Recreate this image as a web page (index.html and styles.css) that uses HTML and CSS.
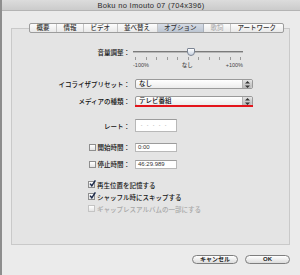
FILE: index.html
```
<!DOCTYPE html>
<html lang="ja">
<head>
    <meta charset="UTF-8">
    <title>Boku no Imouto 07 (704x396)</title>
    <link rel="stylesheet" href="styles.css">
</head>
<body>
    <div class="window">
        <div class="titlebar">Boku no Imouto 07 (704x396)</div>

        <div class="content">
            <nav class="tabs">
                <span class="tab">概要</span>
                <span class="tab">情報</span>
                <span class="tab">ビデオ</span>
                <span class="tab">並べ替え</span>
                <span class="tab active">オプション</span>
                <span class="tab disabled">歌詞</span>
                <span class="tab last">アートワーク</span>
            </nav>

            <section class="panel">
                <!-- 音量 -->
                <div class="row row-volume">
                    <span class="label">音量調整：</span>
                    <div class="slider">
                        <span class="track"></span>
                        <span class="thumb"></span>
                    </div>
                </div>
                <div class="scale">
                    <div class="ticks">
                        <i></i><i></i><i></i><i></i><i></i><i></i><i></i><i></i><i></i><i></i><i></i>
                    </div>
                    <div class="scale-labels">
                        <span>-100%</span>
                        <span>なし</span>
                        <span>+100%</span>
                    </div>
                </div>

                <div class="row row-eq">
                    <span class="label">イコライザプリセット：</span>
                    <div class="popup">
                        <span class="popup-text">なし</span>
                        <span class="popup-arrows">
                            <svg width="5" height="7" viewBox="0 0 5 7"><path d="M2.5 0 L5 2.6 L0 2.6 Z M2.5 7 L5 4.4 L0 4.4 Z" fill="#333"/></svg>
                        </span>
                    </div>
                </div>

                <div class="row row-media">
                    <span class="label">メディアの種類：</span>
                    <div class="popup marked">
                        <span class="popup-text">テレビ番組</span>
                        <span class="popup-arrows">
                            <svg width="5" height="7" viewBox="0 0 5 7"><path d="M2.5 0 L5 2.6 L0 2.6 Z M2.5 7 L5 4.4 L0 4.4 Z" fill="#333"/></svg>
                        </span>
                    </div>
                </div>

                <div class="row row-rate">
                    <span class="label">レート：</span>
                    <div class="field rate">・・・・・</div>
                </div>

                <div class="row row-start">
                    <span class="label"><span class="checkbox"></span>開始時間：</span>
                    <div class="field time">0:00</div>
                </div>

                <div class="row row-stop">
                    <span class="label"><span class="checkbox"></span>停止時間：</span>
                    <div class="field time">46:29.989</div>
                </div>

                <div class="check-row first">
                    <span class="checkbox checked">
                        <svg width="7" height="7" viewBox="0 0 7 7"><path d="M1 3.6 L2.8 5.8 L6.4 0.4" fill="none" stroke="#1d2a4a" stroke-width="1.5"/></svg>
                    </span>
                    <span>再生位置を記憶する</span>
                </div>
                <div class="check-row">
                    <span class="checkbox checked">
                        <svg width="7" height="7" viewBox="0 0 7 7"><path d="M1 3.6 L2.8 5.8 L6.4 0.4" fill="none" stroke="#1d2a4a" stroke-width="1.5"/></svg>
                    </span>
                    <span>シャッフル時にスキップする</span>
                </div>
                <div class="check-row disabled">
                    <span class="checkbox"></span>
                    <span>ギャップレスアルバムの一部にする</span>
                </div>
            </section>

            <div class="buttons">
                <button class="btn">キャンセル</button>
                <button class="btn ok">OK</button>
            </div>
        </div>
    </div>
</body>
</html>
```

FILE: styles.css
```
* {
    margin: 0;
    padding: 0;
    box-sizing: border-box;
}

body {
    font-family: 'Liberation Sans', 'Noto Sans CJK JP', sans-serif;
    font-size: 6.5px;
    font-weight: 500;
    color: #111;
    background: #ececec;
}

.window {
    width: 300px;
    height: 275px;
    border-left: 2px solid #8e8e8e;
    background: #ebebeb;
    overflow: hidden;
}

.titlebar {
    height: 11px;
    line-height: 11px;
    text-align: center;
    font-size: 7.5px;
    font-weight: normal;
    letter-spacing: 0.3px;
    color: #2a2a2a;
    background: linear-gradient(#dcdcdc, #cbcbcb);
    border-bottom: 1px solid #b4b4b4;
}

.content {
    padding-top: 12px;
}

/* タブ */
.tabs {
    position: relative;
    z-index: 1;
    display: flex;
    margin-left: 27px;
    width: max-content;
    height: 10px;
    border: 1px solid #9c9c9c;
    border-radius: 2px;
    background: linear-gradient(#fdfdfd, #e9e9e9);
}

.tab {
    padding: 0 6.5px;
    line-height: 8px;
    border-right: 1px solid #c4c4c4;
    color: #333;
}

.tab.last {
    border-right: none;
}

.tab.active {
    background: linear-gradient(#d6dce6, #bcc5d2);
    border-right-color: #a8b0bc;
}

.tab.disabled {
    color: #b0b0b0;
}

/* パネル */
.panel {
    margin: -5px 0 0 9px;
    width: 279px;
    height: 217px;
    border: 1px solid #c9c9c9;
    background: #e4e4e4;
}

.row {
    display: grid;
    grid-template-columns: 118px 1fr;
    column-gap: 5px;
    align-items: center;
}

.label {
    text-align: right;
    white-space: nowrap;
}

.row-volume {
    margin-top: 18px;
    height: 10px;
}

.slider {
    position: relative;
    width: 110px;
    height: 10px;
    margin-left: -2px;
}

.track {
    display: block;
    position: absolute;
    left: 0;
    right: 0;
    top: 4px;
    height: 2px;
    background: #7a7a7a;
    border-bottom: 1px solid #b8b8b8;
}

.thumb {
    position: absolute;
    left: 54px;
    top: 1px;
    width: 8px;
    height: 8px;
    border: 1px solid #7c8594;
    border-radius: 1px 1px 4px 4px;
    background: linear-gradient(#ffffff, #c9d3e2);
}

.scale {
    margin-left: 121px;
    width: 110px;
}

.ticks {
    display: flex;
    justify-content: space-between;
    padding: 0 2px;
    height: 3px;
}

.ticks i {
    width: 1px;
    height: 3px;
    background: #9a9a9a;
}

.scale-labels {
    display: flex;
    justify-content: space-between;
    margin-top: 1px;
    line-height: 8px;
    font-size: 5.5px;
    color: #444;
}

.row-eq {
    margin-top: 10px;
}

.row-media {
    margin-top: 7px;
}

.popup {
    position: relative;
    display: flex;
    align-items: center;
    width: 118px;
    height: 10px;
    border: 1px solid #9a9a9a;
    border-radius: 2px;
    background: linear-gradient(#ffffff, #ececec);
}

.popup-text {
    flex: 1;
    padding-left: 3px;
    line-height: 8px;
}

.popup-arrows {
    display: flex;
    align-items: center;
    justify-content: center;
    width: 10px;
    height: 8px;
    border-left: 1px solid #b0b0b0;
    border-radius: 0 2px 2px 0;
    background: linear-gradient(#e2e2e2, #b9b9b9);
}

.popup.marked::after {
    content: '';
    position: absolute;
    left: -1px;
    right: -1px;
    bottom: -2px;
    height: 2px;
    background: #e4141b;
}

.row-rate {
    margin-top: 13px;
}

.field {
    width: 42px;
    background: #fff;
    border: 1px solid #b8b8b8;
    border-top-color: #9c9c9c;
    padding-left: 2px;
    font-family: 'Liberation Sans', sans-serif;
    font-weight: normal;
}

.field.rate {
    height: 13px;
    line-height: 11px;
    color: #c8c8c8;
    letter-spacing: -1px;
}

.field.time {
    height: 9px;
    line-height: 7px;
    font-size: 6px;
    color: #333;
}

.row-start {
    margin-top: 10px;
}

.row-stop {
    margin-top: 7px;
}

.row .label .checkbox {
    margin-right: 2px;
}

.checkbox {
    display: inline-flex;
    align-items: center;
    justify-content: center;
    vertical-align: -1px;
    width: 7px;
    height: 7px;
    border: 1px solid #8e8e8e;
    background: linear-gradient(#ffffff, #e4e4e4);
}

.checkbox svg {
    margin-top: -2px;
    margin-right: -2px;
}

.check-row {
    display: flex;
    align-items: center;
    gap: 2px;
    height: 9px;
    margin-top: 3px;
    padding-left: 76px;
    white-space: nowrap;
}

.check-row.first {
    margin-top: 11px;
}

.check-row.disabled {
    color: #a8a8a8;
}

.check-row.disabled .checkbox {
    border-color: #c4c4c4;
}

/* ボタン */
.buttons {
    display: flex;
    justify-content: flex-end;
    gap: 7px;
    margin-top: 10px;
    padding-right: 10px;
}

.btn {
    width: 46px;
    height: 9px;
    border: 1px solid #7e7e7e;
    border-radius: 5px;
    background: linear-gradient(#ffffff, #dcdcdc);
    font-family: 'Liberation Sans', 'Noto Sans CJK JP', sans-serif;
    font-size: 6px;
    font-weight: bold;
    line-height: 7px;
    color: #222;
}

.btn.ok {
    width: 45px;
}
```
